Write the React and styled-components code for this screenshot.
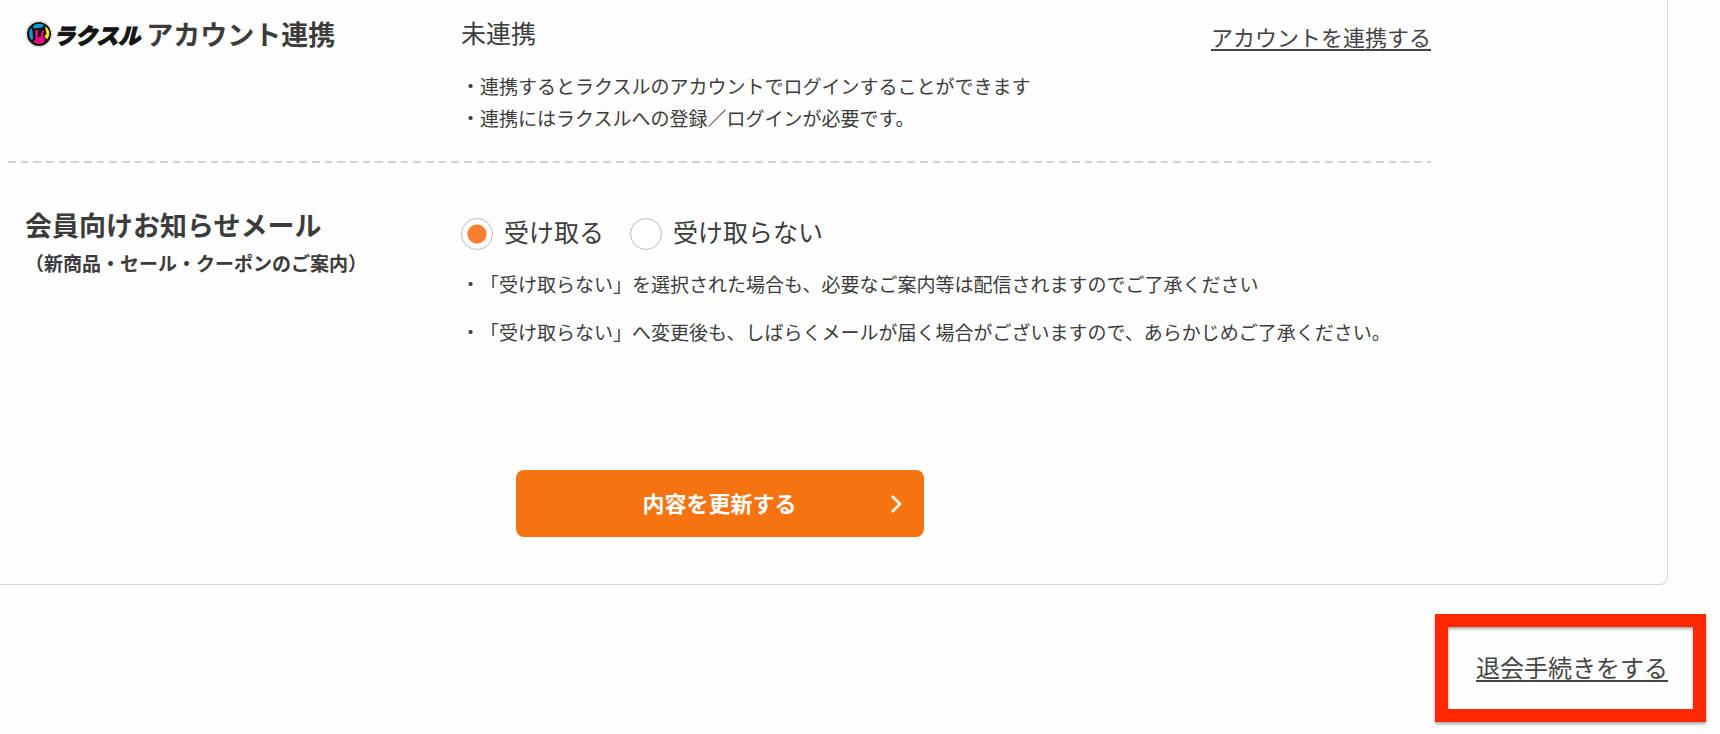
import React, { useState } from 'react';
import styled, { createGlobalStyle } from 'styled-components';

const GlobalStyle = createGlobalStyle`
  * {
    box-sizing: border-box;
  }

  body {
    margin: 0;
    background: #fefefe;
    color: #3c3c3c;
    font-family: "Noto Sans CJK JP", "Liberation Sans", sans-serif;
    text-spacing-trim: space-all;
  }
`;

const Page = styled.main`
  padding-bottom: 11px;
`;

const Panel = styled.form`
  margin-right: 52px;
  padding: 0 236px 47px 8px;
  border: 1px solid #d8d8d8;
  border-top: 0;
  border-left: 0;
  border-bottom-right-radius: 8px;
`;

const Row = styled.section`
  display: grid;
  grid-template-columns: 436px 1fr auto;
  align-items: start;
  padding: ${(props) => props.$top}px 0 ${(props) => props.$bottom}px 17px;
`;

const Divider = styled.hr`
  height: 2px;
  margin: 0;
  border: 0;
  background: repeating-linear-gradient(
    to right,
    #d2d2d2 0 8px, transparent 8px 13px,
    #d2d2d2 13px 20px, transparent 20px 25px,
    #d2d2d2 25px 33px, transparent 33px 38px
  );
`;

const Heading = styled.h2`
  display: flex;
  align-items: center;
  margin: 0;
  font-size: 27px;
  font-weight: bold;
  line-height: 36px;
`;

const SubHeading = styled.p`
  margin: 4px 0 0;
  font-size: 19px;
  font-weight: bold;
  line-height: 32px;
`;

const Status = styled.p`
  margin: 0;
  font-size: 25px;
  line-height: 32px;
`;

const Notes = styled.ul`
  display: flex;
  flex-direction: column;
  gap: ${(props) => props.$gap}px;
  margin: ${(props) => props.$top}px 0 0;
  padding: 0;
  list-style: none;
  font-size: 19px;
  line-height: 32px;
  white-space: nowrap;
`;

const TextLink = styled.a`
  display: block;
  color: #444;
  font-size: ${(props) => props.$size}px;
  line-height: 40px;
  text-decoration: underline;
  text-decoration-thickness: 2px;
  text-underline-offset: 3px;
  text-decoration-skip-ink: none;
`;

const Brand = styled.span`
  display: flex;
  align-items: center;
  margin-right: 6px;
  color: #151515;
  font-size: 22px;
  font-weight: 900;
  font-style: italic;
  -webkit-text-stroke: 1px #151515;
`;

const RadioGroup = styled.div`
  display: flex;
  gap: 26px;
  padding-top: 11px;
`;

const RadioLabel = styled.label`
  display: flex;
  gap: 11px;
  font-size: 25px;
  line-height: 26px;
  cursor: pointer;
`;

const Radio = styled.input`
  appearance: none;
  width: 32px;
  height: 32px;
  margin: 0;
  border: 1px solid #bbb;
  border-radius: 50%;
  background: #fff;
  cursor: pointer;

  &:checked {
    background: radial-gradient(circle, #fa7e30 9px, #fff 10px);
  }
`;

const SubmitButton = styled.button`
  display: grid;
  grid-template-columns: 1fr auto 1fr;
  align-items: center;
  width: 408px;
  height: 67px;
  margin: 122px auto 0;
  padding: 0 22px;
  border: 0;
  border-radius: 8px;
  background: #f67312;
  color: #fff;
  font-family: inherit;
  font-size: 22px;
  font-weight: bold;
  line-height: 32px;
  cursor: pointer;

  span {
    grid-column: 2;
    padding-bottom: 4px;
  }

  svg {
    justify-self: end;
  }

  &:hover {
    opacity: 0.9;
  }
`;

const Withdraw = styled.div`
  width: fit-content;
  margin: 29px 14px 0 auto;
  padding: 20px 25px 22px 28px;
  border: 13px solid #ff2800;
  box-shadow: 0 2px 3px rgba(0, 0, 0, 0.35), inset 0 2px 3px rgba(0, 0, 0, 0.35);
`;

const BrandMark = () => (
  <svg width="28" height="30" viewBox="0 0 28 30" aria-hidden="true">
    <circle cx="14" cy="15" r="13" fill="#fff" stroke="#999" strokeDasharray="1 1" />
    <circle cx="14" cy="15" r="12" fill="#111" />
    <path d="M8 7C11 4.500 15 4 19 6L17 8.500L9 9.500Z" fill="#179bd7" />
    <path d="M6 9L7.500 11.500L8 20L6.500 21C3.500 17 3.500 12.500 6 9Z" fill="#179bd7" />
    <path d="M10 11.500L13.500 11L12.500 18L15.500 17.500L16.500 12L19 11.500L18 18L20.500 19L19 23.500C15.500 26 10.500 25 8 22.500L10.500 20.500Z" fill="#e5097f" />
    <path d="M20 8L22 8.500C25 12 25 17 22 20.500L19.500 17.500L21.500 14.500Z" fill="#f8e71c" />
  </svg>
);

const Chevron = () => (
  <svg width="12" height="20" viewBox="0 0 12 20" fill="none" aria-hidden="true">
    <path d="M2 2L10 10L2 18" stroke="#fff" strokeWidth="2.6" />
  </svg>
);

const App = () => {
  const [mail, setMail] = useState('yes');

  return (
    <>
      <GlobalStyle />
      <Page>
        <Panel onSubmit={(e) => e.preventDefault()}>
          <Row $top={16} $bottom={27}>
            <Heading>
              <Brand>
                <BrandMark />
                ラクスル
              </Brand>
              アカウント連携
            </Heading>
            <div>
              <Status>未連携</Status>
              <Notes $gap={0} $top={22}>
                <li>・連携するとラクスルのアカウントでログインすることができます</li>
                <li>・連携にはラクスルへの登録／ログインが必要です。</li>
              </Notes>
            </div>
            <TextLink href="#connect" $size={22}>アカウントを連携する</TextLink>
          </Row>
          <Divider />
          <Row $top={44} $bottom={0}>
            <div>
              <Heading id="mail-heading">会員向けお知らせメール</Heading>
              <SubHeading>（新商品・セール・クーポンのご案内）</SubHeading>
            </div>
            <div>
              <RadioGroup role="radiogroup" aria-labelledby="mail-heading">
                <RadioLabel htmlFor="mail-yes">
                  <Radio
                    type="radio"
                    id="mail-yes"
                    name="mail"
                    checked={mail === 'yes'}
                    onChange={() => setMail('yes')}
                  />
                  受け取る
                </RadioLabel>
                <RadioLabel htmlFor="mail-no">
                  <Radio
                    type="radio"
                    id="mail-no"
                    name="mail"
                    checked={mail === 'no'}
                    onChange={() => setMail('no')}
                  />
                  受け取らない
                </RadioLabel>
              </RadioGroup>
              <Notes $gap={16} $top={18}>
                <li>・「受け取らない」を選択された場合も、必要なご案内等は配信されますのでご了承ください</li>
                <li>・「受け取らない」へ変更後も、しばらくメールが届く場合がございますので、あらかじめご了承ください。</li>
              </Notes>
            </div>
          </Row>
          <SubmitButton type="submit">
            <span>内容を更新する</span>
            <Chevron />
          </SubmitButton>
        </Panel>
        <Withdraw>
          <TextLink href="#withdraw" $size={24}>退会手続きをする</TextLink>
        </Withdraw>
      </Page>
    </>
  );
};

export default App;
